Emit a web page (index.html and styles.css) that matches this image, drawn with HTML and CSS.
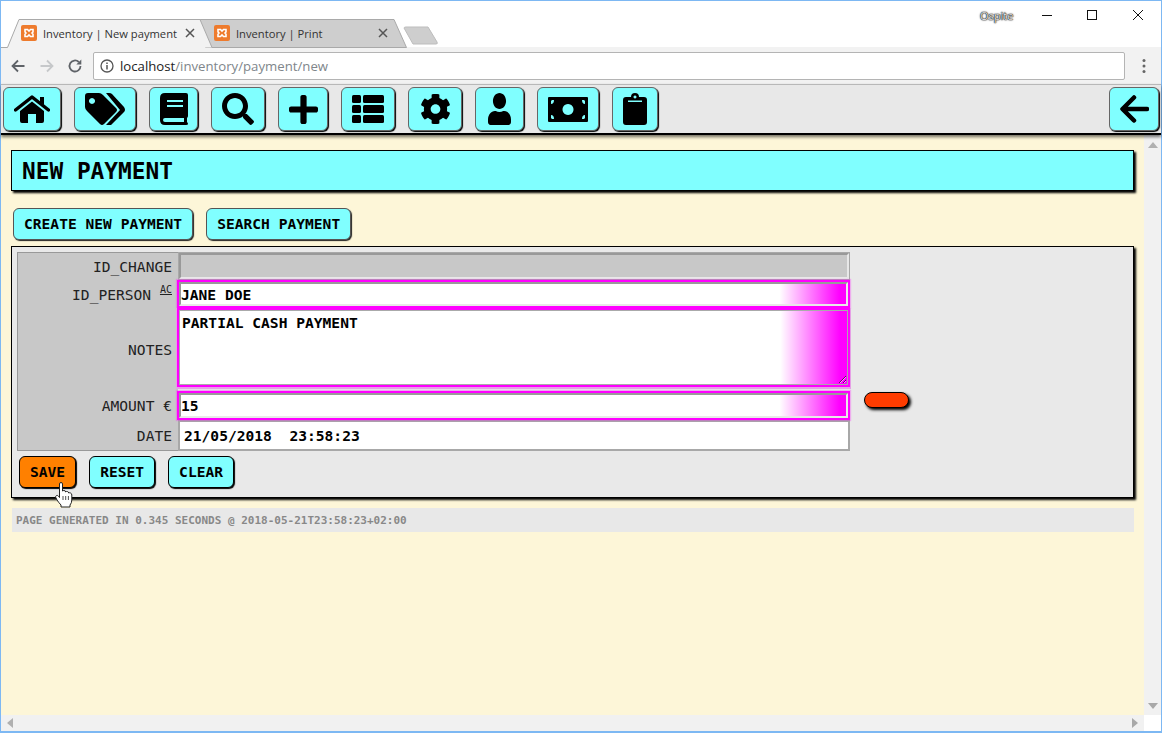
FILE: index.html
```html
<!DOCTYPE html>
<html lang="en">
<head>
<meta charset="UTF-8">
<title>Inventory | New payment</title>
<link rel="stylesheet" href="styles.css">
</head>
<body>
<div class="window">

  <div class="tabstrip">
    <svg class="tabshapes" width="460" height="47" viewBox="0 0 460 47">
      <path d="M204.500 46.500 L192 18.500 H393 L405.500 46.500 Z" fill="#cecece" stroke="#a9a9a9"/>
      <path d="M0 46.500 H6.500 L18 18.500 H199 L211 46.500" fill="#f2f2f2" stroke="#a9a9a9"/>
      <path d="M403 27 Q403 26 405 26 H427 L436 41 Q437 43 435 43 H412 Z" fill="#cecece" stroke="#bdbdbd"/>
    </svg>
    <div class="tab tab-active">
      <svg class="favicon" viewBox="0 0 16 16"><rect width="16" height="16" rx="2" fill="#ee7b2d"/><path d="M4 4.500 H6.500 L8 6 L9.500 4.500 H12 V7 L11 8 L12 9 V11.500 H9.500 L8 10 L6.500 11.500 H4 V9 L5 8 L4 7 Z" fill="none" stroke="#fff" stroke-width="1.600"/></svg>
      <span class="tab-title">Inventory | New payment</span>
      <svg class="tab-close" viewBox="0 0 10 10"><path d="M1 1 L9 9 M9 1 L1 9" stroke="#555" stroke-width="1.500"/></svg>
    </div>
    <div class="tab">
      <svg class="favicon" viewBox="0 0 16 16"><rect width="16" height="16" rx="2" fill="#ee7b2d"/><path d="M4 4.500 H6.500 L8 6 L9.500 4.500 H12 V7 L11 8 L12 9 V11.500 H9.500 L8 10 L6.500 11.500 H4 V9 L5 8 L4 7 Z" fill="none" stroke="#fff" stroke-width="1.600"/></svg>
      <span class="tab-title">Inventory | Print</span>
      <svg class="tab-close" viewBox="0 0 10 10"><path d="M1 1 L9 9 M9 1 L1 9" stroke="#555" stroke-width="1.500"/></svg>
    </div>
    <span class="os-user">Ospite</span>
    <div class="win-controls">
      <svg viewBox="0 0 46 20"><path d="M19 10.500 H29" stroke="#111" stroke-width="1"/></svg>
      <svg viewBox="0 0 46 20"><rect x="18.500" y="5.500" width="9" height="9" fill="none" stroke="#111"/></svg>
      <svg viewBox="0 0 46 20"><path d="M18 5 L28 15 M28 5 L18 15" stroke="#111" stroke-width="1"/></svg>
    </div>
  </div>

  <div class="addressbar">
    <svg class="chrome-icon" viewBox="0 0 16 16"><path d="M14.500 8 H2.500 M8 2.500 L2.500 8 L8 13.500" fill="none" stroke="#5f6368" stroke-width="1.800"/></svg>
    <svg class="chrome-icon" viewBox="0 0 16 16"><path d="M1.500 8 H13.500 M8 2.500 L13.500 8 L8 13.500" fill="none" stroke="#c6c8ca" stroke-width="1.800"/></svg>
    <svg class="chrome-icon" viewBox="0 0 16 16"><path d="M13.500 8 A5.500 5.500 0 1 1 11.800 4" fill="none" stroke="#5f6368" stroke-width="1.800"/><path d="M14.300 1.500 V6.500 H9.300 Z" fill="#5f6368"/></svg>
    <div class="omnibox">
      <svg class="info-icon" viewBox="0 0 14 14"><circle cx="7" cy="7" r="6" fill="none" stroke="#555" stroke-width="1.300"/><path d="M7 6 V10.500 M7 3.500 V5" stroke="#555" stroke-width="1.500"/></svg>
      <span class="url"><span class="url-host">localhost</span>/inventory/payment/new</span>
    </div>
    <svg class="menu-dots" viewBox="0 0 4 16"><circle cx="2" cy="2.500" r="1.500"/><circle cx="2" cy="8" r="1.500"/><circle cx="2" cy="13.500" r="1.500"/></svg>
  </div>

  <nav class="appnav">
    <a class="navbtn w58"><svg width="36" height="28" viewBox="0 0 36 28"><path d="M1.500 15 L18 2 L34.500 15" fill="none" stroke="#000" stroke-width="3.500" stroke-linecap="round" stroke-linejoin="round"/><path d="M26 2 H30 V10 L26 7 Z" fill="#000"/><path d="M6 16 L18 6.500 L30 16 V26 Q30 28 28 28 H22 V19 H14 V28 H8 Q6 28 6 26 Z" fill="#000"/></svg></a>
    <a class="navbtn w62"><svg width="40" height="32" viewBox="0 0 40 32"><path d="M0 3 Q0 0 3 0 H14 Q16 0 18 2 L31 15 Q33 17 31 19 L19 31 Q17 33 15 31 L2 18 Q0 16 0 14 Z M7 5 A3 3 0 1 0 7.010 5 Z" fill="#000" fill-rule="evenodd"/><path d="M21 0 H24 Q26 0 27 1 L39 14 Q41 17 39 19 L26 32 H21 L35 17 Z" fill="#000"/></svg></a>
    <a class="navbtn w49"><svg width="28" height="32" viewBox="0 0 28 32"><path d="M5 0 H26 Q28 0 28 2 V23 Q28 24 27 25 V29 Q28 30 28 31 Q28 32 26 32 H5 Q0 32 0 27 V5 Q0 0 5 0 Z M7 7 V9 H23 V7 Z M7 12 V14 H23 V12 Z M5 25 Q3 25 3 27 Q3 29 5 29 H24 V25 Z" fill="#000" fill-rule="evenodd"/></svg></a>
    <a class="navbtn w54"><svg width="32" height="32" viewBox="0 0 512 512"><path d="M505 442.700L405.300 343c-4.500-4.500-10.600-7-17-7H372c27.600-35.300 44-79.700 44-128C416 93.100 322.900 0 208 0S0 93.100 0 208s93.100 208 208 208c48.300 0 92.700-16.400 128-44v16.300c0 6.400 2.500 12.500 7 17l99.700 99.700c9.400 9.400 24.600 9.400 33.900 0l28.300-28.300c9.400-9.400 9.400-24.600.1-34zM208 336c-70.700 0-128-57.200-128-128 0-70.700 57.200-128 128-128 70.700 0 128 57.200 128 128 0 70.700-57.200 128-128 128z"/></svg></a>
    <a class="navbtn w50"><svg width="29" height="29" viewBox="0 0 448 448"><path d="M416 176H272V32c0-17.670-14.330-32-32-32h-32c-17.670 0-32 14.330-32 32v144H32c-17.670 0-32 14.330-32 32v32c0 17.670 14.330 32 32 32h144v144c0 17.670 14.330 32 32 32h32c17.670 0 32-14.330 32-32V272h144c17.670 0 32-14.330 32-32v-32c0-17.670-14.330-32-32-32z"/></svg></a>
    <a class="navbtn w54"><svg width="32" height="28" viewBox="0 0 32 28"><rect width="9" height="8" rx="1.500"/><rect x="11" width="21" height="8" rx="1.500"/><rect y="10" width="9" height="8" rx="1.500"/><rect x="11" y="10" width="21" height="8" rx="1.500"/><rect y="20" width="9" height="8" rx="1.500"/><rect x="11" y="20" width="21" height="8" rx="1.500"/></svg></a>
    <a class="navbtn w54"><svg width="31" height="32" viewBox="0 0 512 512"><path d="M487.400 315.700l-42.600-24.600c4.300-23.200 4.300-47 0-70.200l42.600-24.600c4.900-2.800 7.100-8.600 5.500-14-11.100-35.600-30-67.800-54.700-94.600-3.800-4.100-10-5.100-14.800-2.300L380.800 110c-17.900-15.400-38.500-27.300-60.800-35.100V25.800c0-5.600-3.900-10.500-9.400-11.700-36.700-8.200-74.300-7.800-109.200 0-5.500 1.200-9.400 6.100-9.400 11.700V75c-22.200 7.900-42.800 19.800-60.800 35.100L88.700 85.500c-4.900-2.800-11-1.900-14.800 2.300-24.700 26.700-43.600 58.900-54.700 94.600-1.700 5.400.6 11.200 5.500 14L67.300 221c-4.300 23.200-4.300 47 0 70.200l-42.600 24.600c-4.900 2.800-7.100 8.600-5.500 14 11.100 35.600 30 67.800 54.700 94.600 3.800 4.100 10 5.100 14.800 2.300l42.600-24.600c17.900 15.400 38.500 27.300 60.800 35.100v49.200c0 5.600 3.900 10.500 9.400 11.700 36.700 8.200 74.300 7.800 109.200 0 5.500-1.200 9.400-6.100 9.400-11.700v-49.200c22.200-7.900 42.800-19.800 60.800-35.100l42.600 24.600c4.900 2.800 11 1.900 14.800-2.300 24.700-26.700 43.600-58.900 54.700-94.600 1.500-5.500-.7-11.300-5.600-14.100zM256 336c-44.100 0-80-35.900-80-80s35.900-80 80-80 80 35.900 80 80-35.900 80-80 80z"/></svg></a>
    <a class="navbtn w49"><svg width="23" height="32" viewBox="0 0 448 512" preserveAspectRatio="none"><path d="M224 256c70.700 0 128-57.300 128-128S294.700 0 224 0 96 57.300 96 128s57.300 128 128 128zm89.600 32h-16.700c-22.200 10.200-46.900 16-72.900 16s-50.600-5.800-72.900-16h-16.700C60.200 288 0 348.200 0 422.400V464c0 26.500 21.500 48 48 48h352c26.500 0 48-21.500 48-48v-41.600c0-74.200-60.200-134.400-134.400-134.400z"/></svg></a>
    <a class="navbtn w62"><svg width="40" height="25" viewBox="0 0 40 25"><path d="M0 1 Q0 0 1 0 H39 Q40 0 40 1 V24 Q40 25 39 25 H1 Q0 25 0 24 Z M4 3 L3 4 V7 Q6 7 6 3 Z M34 3 Q34 7 37 7 V4 L36 3 Z M3 18 V21 L4 22 H6 Q6 18 3 18 Z M37 18 Q34 18 34 22 H36 L37 21 Z M20 7 A5.500 5.500 0 1 0 20.010 7 Z" fill="#000" fill-rule="evenodd"/></svg></a>
    <a class="navbtn w46"><svg width="24" height="32" viewBox="0 0 24 32"><path d="M3 4 H8 A4 4 0 0 1 16 4 H21 Q24 4 24 7 V29 Q24 32 21 32 H3 Q0 32 0 29 V7 Q0 4 3 4 Z M12 2.500 A1.500 1.500 0 1 0 12.010 2.500 Z M5 7.500 V9 H19 V7.500 Z" fill="#000" fill-rule="evenodd"/></svg></a>
    <a class="navbtn navbtn-back"><svg width="29" height="28" viewBox="0 0 29 28"><path d="M27 14 H3 M14 2.500 L2.500 14 L14 25.500" fill="none" stroke="#000" stroke-width="4.500" stroke-linecap="round" stroke-linejoin="round"/></svg></a>
  </nav>

  <div class="viewport">
    <main class="content">
      <h1 class="page-title">NEW PAYMENT</h1>
      <div class="actions">
        <a class="btn btn-soft">CREATE NEW PAYMENT</a>
        <a class="btn btn-soft">SEARCH PAYMENT</a>
      </div>
      <section class="panel">
        <div class="form-row-wrap">
          <form class="form-grid">
            <label class="lbl">ID_CHANGE</label>
            <div class="field field-off"></div>
            <label class="lbl">ID_PERSON <sup class="ac">AC</sup></label>
            <div class="field field-req">JANE DOE</div>
            <label class="lbl">NOTES</label>
            <div class="notes-wrap"><textarea class="notes">PARTIAL CASH PAYMENT</textarea></div>
            <label class="lbl">AMOUNT €</label>
            <div class="field field-req">15</div>
            <label class="lbl">DATE</label>
            <div class="field field-date">21/05/2018  23:58:23</div>
          </form>
          <span class="pill"></span>
        </div>
        <div class="form-buttons">
          <a class="btn btn-hard btn-save">SAVE</a>
          <a class="btn btn-hard">RESET</a>
          <a class="btn btn-hard">CLEAR</a>
        </div>
      </section>
      <footer class="generated">PAGE GENERATED IN 0.345 SECONDS @ 2018-05-21T23:58:23+02:00</footer>
    </main>
    <div class="vscroll">
      <svg width="10" height="6" viewBox="0 0 10 6"><path d="M5 0 L10 6 H0 Z" fill="#b0b0b0"/></svg>
      <svg width="10" height="6" viewBox="0 0 10 6"><path d="M0 0 H10 L5 6 Z" fill="#a8a8a8"/></svg>
    </div>
  </div>
  <div class="hscroll">
    <div class="hscroll-track">
      <svg width="6" height="10" viewBox="0 0 6 10"><path d="M6 0 V10 L0 5 Z" fill="#b0b0b0"/></svg>
      <svg width="6" height="10" viewBox="0 0 6 10"><path d="M0 0 V10 L6 5 Z" fill="#a8a8a8"/></svg>
    </div>
    <div class="scroll-corner"></div>
  </div>

  <svg class="hand" width="18" height="26" viewBox="0 0 18 26"><path d="M4.500 2 Q4.500 0.500 6 0.500 Q7.500 0.500 7.500 2 V9 Q8 8.500 9 8.500 Q10.500 8.500 10.700 10 Q11.300 9.300 12.300 9.500 Q13.600 9.800 13.700 11 Q14.500 10.500 15.500 11 Q16.800 11.500 16.800 13 V18 Q16.800 21 15 23 V25 H6 V23 Q4 21 2 18 L0.800 15.500 Q0.300 14 1.500 13.500 Q2.700 13 3.700 14.500 L4.500 15.500 Z" fill="#fff" stroke="#222" stroke-width="1" stroke-linejoin="round"/><path d="M8 14 V18 M10.700 14 V18 M13.400 14 V18" stroke="#222" stroke-width=".8"/></svg>
</div>
</body>
</html>
```

FILE: styles.css
```css
* {
  box-sizing: border-box;
}
html, body {
  margin: 0;
  height: 100%;
  overflow: hidden;
}
.window {
  position: relative;
  display: flex;
  flex-direction: column;
  width: 1162px;
  height: 733px;
  border: 1px solid #7db8f3;
  border-bottom-width: 2px;
  background: #fff;
  font-family: "DejaVu Sans Mono", monospace;
  color: #000;
}

/* browser chrome */
.tabstrip {
  position: relative;
  display: flex;
  flex: 0 0 46px;
  padding: 18px 0 0 6px;
  background: #fff;
  font-family: "Open Sans", sans-serif;
  font-size: 11.200px;
  color: #333;
}
.tabshapes {
  position: absolute;
  left: 0;
  top: 0;
}
.tab {
  position: relative;
  display: flex;
  align-items: center;
  width: 193px;
  height: 28px;
  padding: 0 5px 0 14px;
}
.favicon {
  flex: none;
  width: 16px;
  height: 16px;
  margin-right: 6px;
}
.tab-title {
  flex: 1;
  white-space: nowrap;
}
.tab-close {
  flex: none;
  width: 10px;
  height: 10px;
}
.os-user {
  position: absolute;
  left: 979px;
  top: 7px;
  font-size: 11px;
  color: #e4e4e4;
  text-shadow: 0 0 1px #000, 0 0 1px #000, 0 0 2px #333;
}
.win-controls {
  position: absolute;
  right: 0;
  top: 4px;
  display: flex;
}
.win-controls svg {
  width: 46px;
  height: 20px;
}
.addressbar {
  display: flex;
  flex: 0 0 37px;
  align-items: center;
  padding: 0 6px 0 9px;
  background: #f2f2f2;
}
.chrome-icon {
  width: 16px;
  height: 16px;
  margin-right: 13px;
}
.chrome-icon + .chrome-icon + .chrome-icon {
  margin-left: -1px;
  margin-right: 10px;
}
.omnibox {
  display: flex;
  align-items: center;
  width: 1032px;
  height: 28px;
  padding-left: 6px;
  background: #fff;
  border: 1px solid #b4b4b4;
  border-radius: 2px;
  font-family: "Open Sans", sans-serif;
  font-size: 13.200px;
  color: #80868b;
}
.info-icon {
  width: 14px;
  height: 14px;
  margin-right: 6px;
}
.url-host {
  color: #222;
}
.menu-dots {
  width: 4px;
  height: 16px;
  margin-left: 17px;
  fill: #666;
}

/* app nav */
.appnav {
  display: flex;
  flex: 0 0 51px;
  gap: 13px;
  padding: 2px 2px 0 2px;
  background: #e8e8e8;
  border-top: 1px solid #b8b8b8;
  border-bottom: 2px solid #000;
  box-shadow: 0 2px 3px rgba(0, 0, 0, .55);
  z-index: 1;
}
.navbtn {
  display: flex;
  align-items: center;
  justify-content: center;
  height: 44px;
  background: #80ffff;
  border: 1px solid #666;
  border-radius: 6px;
  box-shadow: 1px 1px 1px #000;
}
.w46 { width: 46px; }
.w49 { width: 49px; }
.w50 { width: 50px; }
.w54 { width: 54px; }
.w58 { width: 58px; }
.w62 { width: 62px; }
.navbtn-back {
  width: 50px;
  margin-left: auto;
}

/* page */
.viewport {
  display: flex;
  flex: 1;
  min-height: 0;
}
.content {
  flex: 1;
  padding: 15px 9px 0 10px;
  background: #fdf6d8;
}
.vscroll {
  display: flex;
  flex: 0 0 17px;
  flex-direction: column;
  align-items: center;
  justify-content: space-between;
  padding: 7px 0 6px;
  background: #f1f1f1;
}
.hscroll {
  display: flex;
  flex: 0 0 16px;
}
.hscroll-track {
  display: flex;
  flex: 1;
  align-items: center;
  justify-content: space-between;
  padding: 0 6px;
  background: #f1f1f1;
}
.scroll-corner {
  flex: 0 0 17px;
}
.page-title {
  height: 41px;
  margin: 0 1px 0 0;
  padding-left: 10px;
  background: #80ffff;
  border: 1px solid #000;
  box-shadow: 2px 2px 2px #000;
  font-size: 22.800px;
  line-height: 41px;
  font-weight: bold;
}
.actions {
  display: flex;
  gap: 13px;
  margin: 17px 0 6px 2px;
}
.btn {
  display: block;
  height: 32px;
  padding: 0 10px;
  background: #80ffff;
  font-size: 14.600px;
  font-weight: bold;
  line-height: 30px;
}
.btn-soft {
  border: 1px solid #555;
  border-radius: 6px;
  box-shadow: 1px 1px 1px #222;
}
.btn-hard {
  border: 1px solid #000;
  border-radius: 6px;
  box-shadow: 1px 1px 1px #000;
}
.btn-save {
  background: #ff8000;
}
.panel {
  height: 252px;
  margin-right: 1px;
  padding: 5px;
  background: #e9e9e9;
  border: 1px solid #000;
  box-shadow: 2px 2px 2px #000;
}
.form-row-wrap {
  display: flex;
  align-items: flex-start;
}
.form-grid {
  display: grid;
  grid-template-columns: 161px 672px;
  grid-template-rows: 28px 28px 83px 29px 31px;
  width: 833px;
  background: #e9e9e9;
}
.lbl {
  display: flex;
  align-items: center;
  justify-content: flex-end;
  padding-right: 6px;
  background: #c8c8c8;
  border-left: 1px solid #999;
  font-size: 14.600px;
  white-space: pre;
  color: #222;
}
.lbl:first-child {
  border-top: 1px solid #999;
}
.lbl:nth-last-child(2) {
  border-bottom: 1px solid #999;
}
.ac {
  align-self: flex-start;
  margin-top: 5px;
  font-size: 10px;
  line-height: 9px;
  text-decoration: underline;
}
.field {
  display: flex;
  align-items: center;
  border: 2px solid;
  border-color: #999 #e8e8e8 #e8e8e8 #999;
  font-size: 14.600px;
  font-weight: bold;
  white-space: pre;
}
.field-off {
  margin: 1px;
  background: #c8c8c8;
  outline: 1px solid #a8a8a8;
}
.field-req {
  margin: 2px 2px 2px 1px;
  background: linear-gradient(to right, #fff 90%, #f0f 99%);
  box-shadow: 0 0 0 2px #f0f, 0 0 1px 3px rgba(255, 0, 255, .25);
  z-index: 1;
}
.field-date {
  padding-left: 4px;
  background: #fff;
  border-color: #a8a8a8;
}
.notes-wrap {
  height: 79px;
  margin-left: -1px;
  border: 2px solid #f0f;
  z-index: 1;
  box-shadow: 0 1px 0 1px #e6a0e6;
}
.notes {
  display: block;
  width: 100%;
  height: 100%;
  margin: 0;
  padding: 3px 2px;
  border: 1px solid #aaa;
  outline: none;
  background: linear-gradient(to right, #fff 90%, #f0f 99%);
  font-family: "DejaVu Sans Mono", monospace;
  font-size: 14.600px;
  font-weight: bold;
  color: #000;
}
.pill {
  width: 45px;
  height: 16px;
  margin: 140px 0 0 14px;
  background: #ff3c00;
  border: 1px solid #000;
  border-radius: 8px;
  box-shadow: 2px 2px 3px #000;
}
.form-buttons {
  display: flex;
  gap: 13px;
  margin: 5px 0 0 2px;
}
.generated {
  height: 24px;
  margin: 10px 1px 0 1px;
  padding-left: 4px;
  background: #e8e8e8;
  color: #888;
  font-size: 11px;
  font-weight: bold;
  line-height: 25px;
}
.hand {
  position: absolute;
  left: 54px;
  top: 481px;
}
```
